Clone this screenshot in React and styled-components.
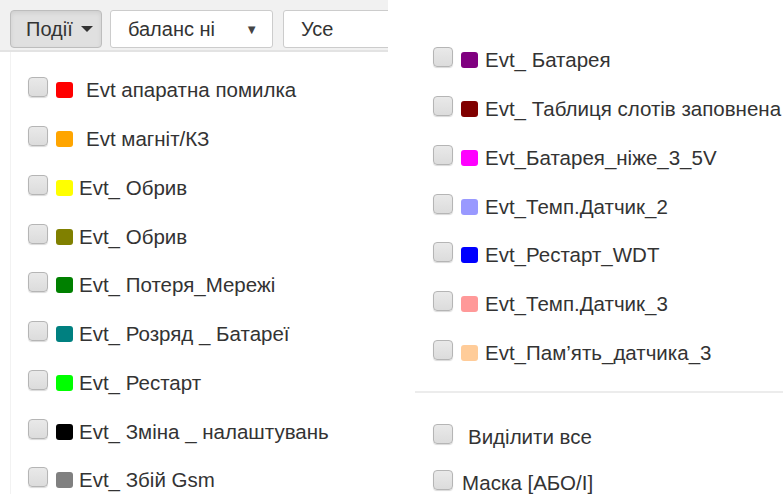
import React from "react";
import styled, { createGlobalStyle } from "styled-components";

const GlobalStyle = createGlobalStyle`
  html, body {
    margin: 0;
    padding: 0;
    background: #fff;
  }
  body {
    font-family: "Liberation Sans", Arial, sans-serif;
    color: #333;
    width: 783px;
    height: 494px;
    overflow: hidden;
  }
`;

const Page = styled.div`
  display: grid;
  grid-template-columns: 388px 1fr;
  column-gap: 27px;
  height: 494px;
`;

const LeftSide = styled.div`
  display: flex;
  flex-direction: column;
`;

const Toolbar = styled.div`
  display: flex;
  align-items: flex-start;
  height: 40px;
  padding: 10px 0 0 10px;
  background: #f1f1f1;
  border-bottom: 2px solid #e3e3e3;
  overflow: hidden;
`;

const DropButton = styled.button`
  display: flex;
  align-items: center;
  flex-shrink: 0;
  box-sizing: border-box;
  height: 38px;
  width: 92px;
  margin-right: 8px;
  padding: 0 0 0 15px;
  font: 20px "Liberation Sans", Arial, sans-serif;
  color: #333;
  background: #e0e0e0;
  border: 1px solid #bdbdbd;
  border-radius: 4px;
  box-shadow: inset 0 2px 4px rgba(0, 0, 0, 0.08);
`;

const Caret = styled.span`
  width: 0;
  height: 0;
  margin-left: 8px;
  border-left: 6px solid transparent;
  border-right: 6px solid transparent;
  border-top: 6px solid #333;
`;

const Field = styled.div`
  display: flex;
  align-items: center;
  justify-content: space-between;
  flex-shrink: 0;
  box-sizing: border-box;
  height: 38px;
  width: ${(p) => p.$width};
  margin-right: 10px;
  padding: 0 14px 0 17px;
  font-size: 20px;
  color: #333;
  background: #fff;
  border: 1px solid #ccc;
  border-radius: 3px;
`;

const SelectArrow = styled.span`
  font-size: 13px;
  color: #444;
`;

const Menu = styled.ul`
  list-style: none;
  margin: 0 0 0 10px;
  padding: 14px 0 0 0;
  border-left: 1px solid #f2f2f2;
`;

const RightMenu = styled.ul`
  list-style: none;
  margin: 0;
  padding: 36px 0 0 0;
`;

const Item = styled.li`
  display: flex;
  align-items: center;
  height: ${(p) => p.$height || 48.75}px;
  padding-left: ${(p) => p.$indent || 17}px;
  font-size: 20.5px;
  color: #333;
  white-space: nowrap;
`;

const Box = styled.span`
  box-sizing: border-box;
  width: 20px;
  height: 20px;
  margin-top: -6px;
  flex-shrink: 0;
  background: linear-gradient(#e9e9e9, #dcdcdc);
  border: 1px solid #b5b5b5;
  border-radius: 4px;
  box-shadow: 0 1px 1px rgba(0, 0, 0, 0.15);
`;

const Swatch = styled.span`
  width: 17px;
  height: 16px;
  margin: 0 ${(p) => p.$gap}px 0 8px;
  flex-shrink: 0;
  background: ${(p) => p.$color};
  border-radius: 3px;
`;

const Caption = styled.span`
  margin-left: ${(p) => p.$offset}px;
`;

const Divider = styled.li`
  height: 2px;
  margin: 14px 0 19px;
  background: #ececec;
`;

const leftEvents = [
  { color: "#ff0000", label: "Evt апаратна помилка", gap: 13 },
  { color: "#ffa500", label: "Evt магніт/КЗ", gap: 13 },
  { color: "#ffff00", label: "Evt_ Обрив" },
  { color: "#808000", label: "Evt_ Обрив" },
  { color: "#008000", label: "Evt_ Потеря_Мережі" },
  { color: "#008080", label: "Evt_ Розряд _ Батареї" },
  { color: "#00ff00", label: "Evt_ Рестарт" },
  { color: "#000000", label: "Evt_ Зміна _ налаштувань" },
  { color: "#808080", label: "Evt_ Збій Gsm" },
];

const rightEvents = [
  { color: "#800080", label: "Evt_ Батарея" },
  { color: "#800000", label: "Evt_ Таблиця слотів заповнена" },
  { color: "#ff00ff", label: "Evt_Батарея_ніже_3_5V" },
  { color: "#9999ff", label: "Evt_Темп.Датчик_2" },
  { color: "#0000ff", label: "Evt_Рестарт_WDT" },
  { color: "#ff9999", label: "Evt_Темп.Датчик_3" },
  { color: "#ffcc99", label: "Evt_Пам’ять_датчика_3" },
];

function EventRow({ color, label, gap = 6, indent }) {
  return (
    <Item $indent={indent}>
      <Box />
      <Swatch $color={color} $gap={gap} />
      {label}
    </Item>
  );
}

export default function App() {
  return (
    <>
      <GlobalStyle />
      <Page>
        <LeftSide>
          <Toolbar>
            <DropButton>
              Події <Caret />
            </DropButton>
            <Field $width="163px">
              баланс ні <SelectArrow>▼</SelectArrow>
            </Field>
            <Field $width="120px">Усе</Field>
          </Toolbar>
          <Menu>
            {leftEvents.map((e, i) => (
              <EventRow key={i} {...e} />
            ))}
          </Menu>
        </LeftSide>
        <RightMenu>
          {rightEvents.map((e, i) => (
            <EventRow key={i} indent={18} gap={7} {...e} />
          ))}
          <Divider />
          <Item $indent={18}>
            <Box />
            <Caption $offset={15}>Виділити все</Caption>
          </Item>
          <Item $indent={18} $height={44}>
            <Box />
            <Caption $offset={9}>Маска [АБО/І]</Caption>
          </Item>
        </RightMenu>
      </Page>
    </>
  );
}
